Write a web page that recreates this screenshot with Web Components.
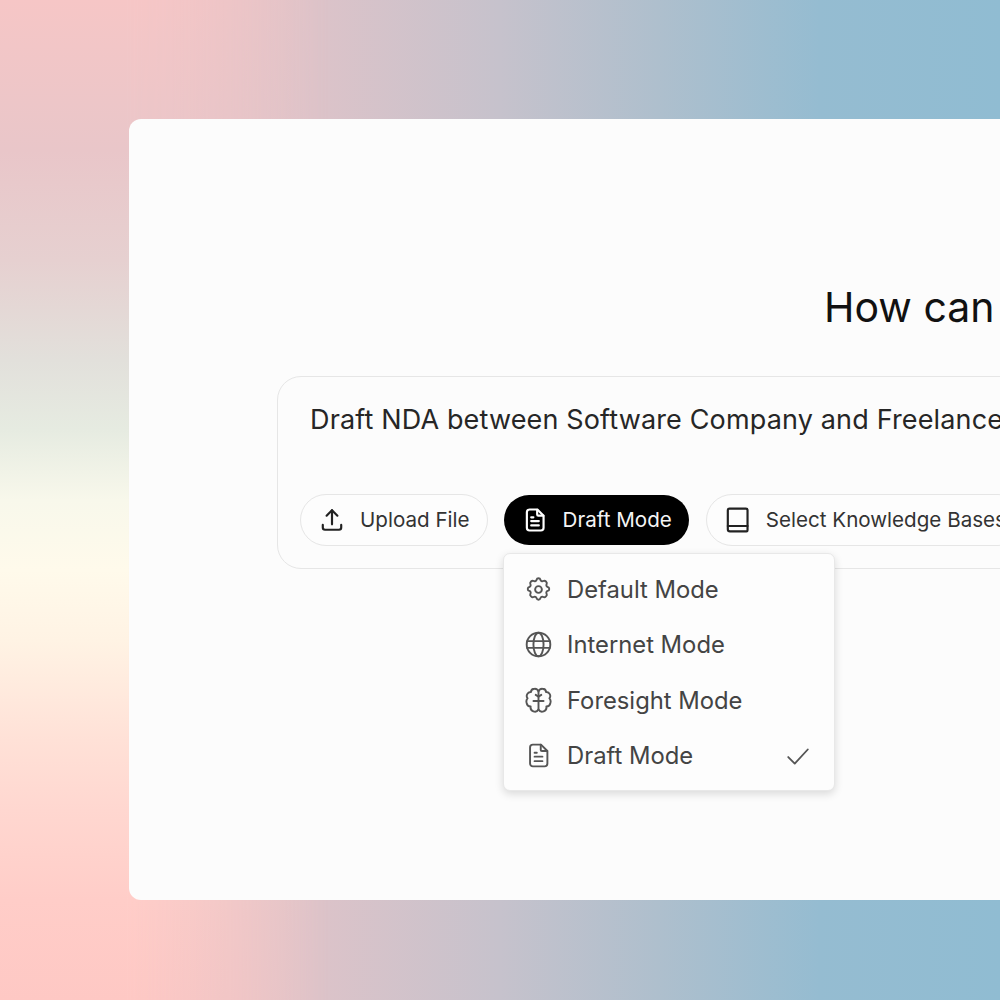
<!DOCTYPE html>
<html lang="en"><head><meta charset="utf-8"><title>How can</title>
<style>
html,body{margin:0;height:100%;overflow:hidden}
body{position:relative;width:1000px;height:1000px;font-family:"Inter","Noto Sans",sans-serif;color:#222;
background:linear-gradient(90deg,#f8c7c6 0%,#eec5c7 15%,#dcc3c9 32%,#c6c2cc 50%,#aebfcd 66%,#95bcd1 82%,#90bcd2 100%);}
body::before{content:"";position:absolute;inset:0;
 background:linear-gradient(180deg,#f6c6c6 0,#e9c6c9 150px,#e6d0d0 260px,#e2e0db 360px,#e6ebe1 430px,#f8f8eb 500px,#fffaeb 570px,#fff3e4 640px,#ffe1d7 740px,#ffd7d0 810px,#ffcdc8 900px,#fec8c4 1000px);
 -webkit-mask-image:linear-gradient(90deg,#000 0,#000 125px,transparent 330px);mask-image:linear-gradient(90deg,#000 0,#000 125px,transparent 330px)}
</style></head><body>
<template id="ic-t"><style>:host{display:inline-flex;width:var(--s,24px);height:var(--s,24px);flex:none}svg{width:100%;height:100%;fill:none;stroke:currentColor;stroke-width:var(--w,2);stroke-linecap:round;stroke-linejoin:round}</style><svg viewBox="0 0 24 24"></svg></template>
<app-shell>
  <main-card>
    <h-title>How can</h-title>
    <composer-box>
      <span slot="text">Draft NDA between Software Company and Freelance</span>
      <pill-btn icon="upload">Upload File</pill-btn>
      <pill-btn icon="file" dark style="--ml:15px">Draft Mode</pill-btn>
      <pill-btn icon="book" style="--ml:16px">Select Knowledge Bases</pill-btn>
      <mode-menu slot="menu">
        <mode-item icon="gear">Default Mode</mode-item>
        <mode-item icon="globe">Internet Mode</mode-item>
        <mode-item icon="brain">Foresight Mode</mode-item>
        <mode-item icon="file" checked>Draft Mode</mode-item>
      </mode-menu>
    </composer-box>
  </main-card>
</app-shell>
<script>
const P={
upload:'<path d="M3.500 16.500v2.500a2 2 0 0 0 2 2h13a2 2 0 0 0 2-2v-2.500"/><path d="M7 8l5-5 5 5"/><path d="M12 3v13"/>',
file:'<path d="M14 2.500v4.500a1 1 0 0 0 1 1h4.700"/><path d="M17 21.700h-10a2.500 2.500 0 0 1-2.500-2.500v-14.400a2.500 2.500 0 0 1 2.500-2.500h7.200l5.700 5.700v11.200a2.500 2.500 0 0 1-2.500 2.500z"/><path d="M8.500 9.500h2"/><path d="M8.500 13h7"/><path d="M8.500 17h7"/>',
book:'<path d="M2.600 20.500V3a1.500 1.500 0 0 1 1.500-1.500h15.200a1.500 1.500 0 0 1 1.500 1.500v18.500a1 1 0 0 1-1 1H4.600a2 2 0 0 1-2-2z"/><path d="M2.600 17.500h18.200"/>',
gear:'<path d="M10.300 3.300c.4-1.800 3-1.800 3.400 0a1.700 1.700 0 0 0 2.600 1.100c1.500-.9 3.800 1.300 2.900 2.900a1.700 1.700 0 0 0 1 2.500c1.800.4 1.800 3 0 3.400a1.700 1.700 0 0 0-1 2.600c.9 1.500-1.400 3.800-2.900 2.900a1.700 1.700 0 0 0-2.600 1c-.4 1.800-3 1.800-3.400 0a1.700 1.700 0 0 0-2.600-1c-1.500.9-3.800-1.400-2.900-2.900a1.700 1.700 0 0 0-1-2.600c-1.800-.4-1.800-3 0-3.400a1.700 1.700 0 0 0 1-2.500c-.9-1.600 1.400-3.800 2.900-2.900a1.700 1.700 0 0 0 2.600-1.100z"/><circle cx="12" cy="12" r="3"/>',
globe:'<circle cx="12" cy="12" r="10.500"/><ellipse cx="12" cy="12" rx="4.500" ry="10.500"/><path d="M2 9h20"/><path d="M2 15h20"/>',
brain:'<path d="M12 4a3.500 3.500 0 0 0-3.500-2.500 3.300 3.300 0 0 0-3.300 3 3.400 3.400 0 0 0-2.900 5.500 4.500 4.500 0 0 0-.8 4.400 3.800 3.800 0 0 0 3.500 3 3.800 3.800 0 0 0 7 2.600V4z"/><path d="M12 4a3.500 3.500 0 0 1 3.500-2.500 3.300 3.300 0 0 1 3.300 3 3.400 3.400 0 0 1 2.900 5.500 4.500 4.500 0 0 1 .8 4.400 3.800 3.800 0 0 1-3.500 3 3.800 3.800 0 0 1-7 2.600"/><path d="M12 12.500H7.500"/><path d="M12 12.500h4.500"/><path d="M12 8.500l-2.500-1.500"/><path d="M12 8.500l2.500-1.500"/>',
check:'<path d="M3 13l6 6L21 6"/>'};
function sh(el,html){el.attachShadow({mode:'open'}).innerHTML=html}
customElements.define('ic-on',class extends HTMLElement{connectedCallback(){
 const r=this.attachShadow({mode:'open'});r.append(document.getElementById('ic-t').content.cloneNode(true));
 r.querySelector('svg').innerHTML=P[this.getAttribute('name')]}});
customElements.define('app-shell',class extends HTMLElement{constructor(){super();sh(this,`<style>:host{display:block;position:relative;width:1000px;height:1000px;padding:119px 0 100px 129px;box-sizing:border-box;overflow:hidden}</style><slot></slot>`)}});
customElements.define('main-card',class extends HTMLElement{constructor(){super();sh(this,`<style>:host{display:block;width:871px;height:781px;background:#fcfcfc;border-radius:12px 0 0 12px;padding:165px 0 0 148px;box-sizing:border-box;overflow:hidden}</style><slot></slot>`)}});
customElements.define('h-title',class extends HTMLElement{constructor(){super();sh(this,`<style>:host{display:block;padding-left:547px;height:46px;font-size:41px;line-height:46px;color:#111;white-space:nowrap;margin-bottom:46px}</style><slot></slot>`)}});
customElements.define('composer-box',class extends HTMLElement{constructor(){super();sh(this,`<style>
:host{display:block;position:relative;width:900px;height:193px;box-sizing:border-box;border:1.500px solid #e6e6e6;border-radius:24px;padding:25px 0 0 22px}
.t{font-size:27px;letter-spacing:.15px;line-height:36px;height:92px;padding-left:10px;color:#262626;white-space:nowrap}
.r{display:flex;align-items:center}
.m{position:absolute;left:225px;top:176px}
</style><div class="t"><slot name="text"></slot></div><div class="r"><slot></slot></div><div class="m"><slot name="menu"></slot></div>`)}});
customElements.define('pill-btn',class extends HTMLElement{constructor(){super();const d=this.hasAttribute('dark');sh(this,`<style>
:host{display:inline-flex;align-items:center;gap:15px;height:52px;box-sizing:border-box;flex:none;margin-left:var(--ml,0);padding:0 17px 0 18px;border-radius:26px;border:1.500px solid ${d?'transparent':'#e6e6e6'};background:${d?'#000':'#fdfdfd'};background-clip:padding-box;color:${d?'#f5f5f5':'#333'};font-size:20.600px;white-space:nowrap}
ic-on{--s:26px;--w:2;color:${d?'#fff':'#222'}}
span{position:relative;top:-1px}
</style><ic-on name="${this.getAttribute('icon')}"></ic-on><span><slot></slot></span>`)}});
customElements.define('mode-menu',class extends HTMLElement{constructor(){super();sh(this,`<style>:host{display:flex;flex-direction:column;width:332px;height:238px;box-sizing:border-box;padding:7.500px 0;background:#fdfdfd;border:1px solid #e8e8e8;border-radius:7px;box-shadow:0 3px 8px rgba(0,0,0,.14)}</style><slot></slot>`)}});
customElements.define('mode-item',class extends HTMLElement{constructor(){super();sh(this,`<style>
:host{display:flex;align-items:center;height:55.500px;flex:none;padding:0 23px 0 21px;gap:15px;font-size:23.800px;color:#444}
ic-on{--s:27px;--w:1.700;color:#555}
.c{--s:26px;margin-left:auto}
</style><ic-on name="${this.getAttribute('icon')}"></ic-on><slot></slot>${this.hasAttribute('checked')?'<ic-on class="c" name="check"></ic-on>':''}`)}});
</script>
</body></html>
